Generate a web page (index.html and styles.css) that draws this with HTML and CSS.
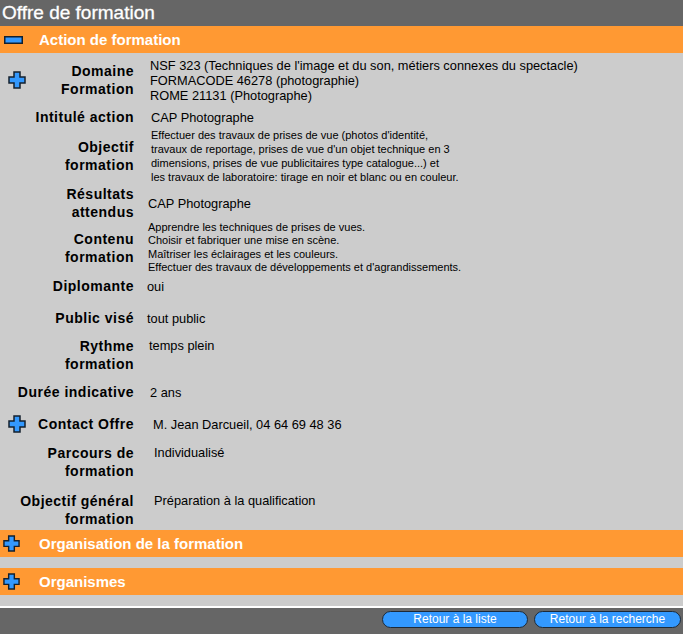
FILE: index.html
```html
<!DOCTYPE html>
<html lang="fr">
<head>
<meta charset="utf-8">
<title>Offre de formation</title>
<link rel="stylesheet" href="styles.css">
</head>
<body>
<div class="page">
  <header class="title">Offre de formation</header>

  <section class="section">
    <div class="bar">
      <svg class="minus" width="19" height="8" viewBox="0 0 19 8"><rect x="0.75" y="0.75" width="17.5" height="6.5" fill="#3399ff" stroke="#14202e" stroke-width="1.5"/></svg>
      <span class="bar-title">Action de formation</span>
    </div>

    <div class="details">
      <div class="row h54">
        <div class="label">
          <svg class="plus" width="18" height="18" viewBox="0 0 18 18"><path d="M6 1H12V6H17V12H12V17H6V12H1V6H6Z" fill="#3399ff" stroke="#14202e" stroke-width="1.5" stroke-linejoin="miter"/></svg>
          <span class="label-text">Domaine<br>Formation</span>
        </div>
        <div class="value">NSF 323 (Techniques de l'image et du son, métiers connexes du spectacle)<br>FORMACODE 46278 (photographie)<br>ROME 21131 (Photographe)</div>
      </div>

      <div class="row h20">
        <div class="label"><span class="label-text">Intitulé action</span></div>
        <div class="value v1">CAP Photographe</div>
      </div>

      <div class="row h58">
        <div class="label"><span class="label-text">Objectif<br>formation</span></div>
        <div class="value small v1">Effectuer des travaux de prises de vue (photos d'identité,<br>travaux de reportage, prises de vue d'un objet technique en 3<br>dimensions, prises de vue publicitaires type catalogue...) et<br>les travaux de laboratoire: tirage en noir et blanc ou en couleur.</div>
      </div>

      <div class="row h36">
        <div class="label"><span class="label-text">Résultats<br>attendus</span></div>
        <div class="value vm2">CAP Photographe</div>
      </div>

      <div class="row h52">
        <div class="label"><span class="label-text">Contenu<br>formation</span></div>
        <div class="value small tight vm2">Apprendre les techniques de prises de vues.<br>Choisir et fabriquer une mise en scène.<br>Maîtriser les éclairages et les couleurs.<br>Effectuer des travaux de développements et d'agrandissements.</div>
      </div>

      <div class="row h26">
        <div class="label"><span class="label-text">Diplomante</span></div>
        <div class="value vm3">oui</div>
      </div>

      <div class="row h38">
        <div class="label"><span class="label-text">Public visé</span></div>
        <div class="value vm3">tout public</div>
      </div>

      <div class="row h36 top">
        <div class="label"><span class="label-text">Rythme<br>formation</span></div>
        <div class="value vm1 first">temps plein</div>
      </div>

      <div class="row h38">
        <div class="label"><span class="label-text">Durée indicative</span></div>
        <div class="value">2 ans</div>
      </div>

      <div class="row h26">
        <div class="label">
          <svg class="plus" width="18" height="18" viewBox="0 0 18 18"><path d="M6 1H12V6H17V12H12V17H6V12H1V6H6Z" fill="#3399ff" stroke="#14202e" stroke-width="1.5"/></svg>
          <span class="label-text">Contact Offre</span>
        </div>
        <div class="value vp3">M. Jean Darcueil, 04 64 69 48 36</div>
      </div>

      <div class="row h48 top pad7">
        <div class="label"><span class="label-text">Parcours de<br>formation</span></div>
        <div class="value vp4 first">Individualisé</div>
      </div>

      <div class="row h45 top pad7">
        <div class="label"><span class="label-text">Objectif général<br>formation</span></div>
        <div class="value vp4 first">Préparation à la qualification</div>
      </div>
    </div>
  </section>

  <section class="section collapsed">
    <div class="bar">
      <svg class="plus bar-plus" width="17" height="17" viewBox="0 0 18 18"><path d="M6 1H12V6H17V12H12V17H6V12H1V6H6Z" fill="#3399ff" stroke="#14202e" stroke-width="1.5"/></svg>
      <span class="bar-title">Organisation de la formation</span>
    </div>
  </section>

  <section class="section collapsed">
    <div class="bar">
      <svg class="plus bar-plus" width="17" height="17" viewBox="0 0 18 18"><path d="M6 1H12V6H17V12H12V17H6V12H1V6H6Z" fill="#3399ff" stroke="#14202e" stroke-width="1.5"/></svg>
      <span class="bar-title">Organismes</span>
    </div>
  </section>

  <div class="spacer"></div>

  <footer class="footer">
    <button class="btn">Retour à la liste</button>
    <button class="btn">Retour à la recherche</button>
  </footer>
</div>
</body>
</html>
```

FILE: styles.css
```css
html, body {
  margin: 0;
  padding: 0;
}

body {
  background: #cccccc;
  font-family: "Liberation Sans", Arial, sans-serif;
  color: #000;
}

.page {
  width: 683px;
  height: 634px;
  display: flex;
  flex-direction: column;
  background: #cccccc;
  overflow: hidden;
}

.title {
  height: 26px;
  background: #666666;
  color: #fff;
  font-size: 19px;
  line-height: 26px;
  padding-left: 2px;
  box-sizing: border-box;
  -webkit-text-stroke: 0.3px #fff;
}

.bar {
  height: 27px;
  background: #ff9933;
  display: flex;
  align-items: center;
  color: #fff;
}

.bar-title {
  font-weight: bold;
  font-size: 15px;
  margin-left: 16px;
}

.minus {
  margin-left: 4px;
  display: block;
}

.bar-plus {
  margin-left: 3px;
  margin-right: 3px;
}

.collapsed + .collapsed {
  margin-top: 11px;
}

.details {
  display: flex;
  flex-direction: column;
}

.row {
  display: grid;
  grid-template-columns: 134px 1fr;
  column-gap: 16px;
  align-items: center;
  box-sizing: border-box;
}

.row.top {
  align-items: start;
}

.row.pad7 {
  padding-top: 7px;
}

.h20 { height: 20px; }
.h26 { height: 26px; }
.h36 { height: 36px; }
.h38 { height: 38px; }
.h45 { height: 45px; }
.h48 { height: 48px; }
.h52 { height: 52px; }
.h54 { height: 54px; }
.h58 { height: 58px; }

.label {
  display: flex;
  align-items: center;
  justify-content: flex-end;
  position: relative;
}

.label .plus {
  position: absolute;
  left: 8px;
  top: 50%;
  margin-top: -9px;
}

.label-text {
  font-weight: bold;
  font-size: 14px;
  line-height: 18px;
  letter-spacing: 0.5px;
  text-align: right;
  color: #000;
}

.value {
  font-size: 12.8px;
  line-height: 15px;
  color: #000;
}

.value.first {
  line-height: 18px;
}

.value.small {
  font-size: 11px;
  line-height: 14px;
}

.value.small.tight {
  line-height: 13.3px;
}

.v1 { margin-left: 1px; }
.vm1 { margin-left: -1px; }
.vm2 { margin-left: -2px; }
.vm3 { margin-left: -3px; }
.vp3 { margin-left: 3px; }
.vp4 { margin-left: 4px; }

.spacer {
  flex: 1;
  border-bottom: 2px solid #ffffff;
}

.footer {
  height: 26px;
  background: #666666;
  display: flex;
  justify-content: flex-end;
  align-items: flex-start;
  gap: 6px;
  padding: 3px 2px 0 0;
  box-sizing: border-box;
}

.btn {
  height: 17px;
  border: 1px solid #1e2a38;
  border-radius: 9px;
  background: #3399ff;
  color: #fff;
  font-family: "Liberation Sans", Arial, sans-serif;
  font-size: 12px;
  line-height: 15px;
  padding: 0;
  margin: 0;
  cursor: pointer;
}

.btn:first-child {
  width: 146px;
}

.btn:last-child {
  width: 147px;
}
```
